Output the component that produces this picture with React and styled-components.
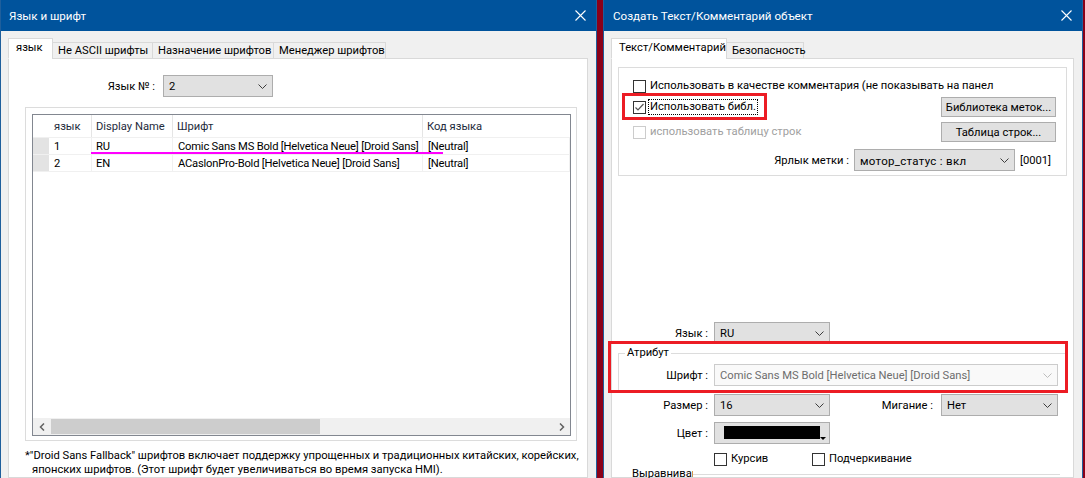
import React from 'react';
import styled, { createGlobalStyle } from 'styled-components';

const GlobalStyle = createGlobalStyle`
  html, body {
    margin: 0;
    padding: 0;
    overflow: hidden;
  }
  body {
    font-family: Roboto, "Liberation Sans", Arial, sans-serif;
    font-size: 11.2px;
    color: #000;
  }
`;

const Desk = styled.div`
  display: flex;
  gap: 6px;
  width: 1085px;
  height: 478px;
  background: #8a0019;
  overflow: hidden;
`;

const Window = styled.div`
  box-sizing: border-box;
  flex: none;
  width: ${p => p.$w}px;
  height: 100%;
  display: flex;
  flex-direction: column;
  background: #f0f0f0;
  border-left: 1px solid #1f5f9c;
  border-right: 1px solid #1f5f9c;
`;

const TitleBar = styled.div`
  flex: none;
  height: 31px;
  display: flex;
  align-items: center;
  justify-content: space-between;
  padding: 0 10px 0 ${p => p.$pad}px;
  background: #00539c;
  color: #fff;
  font-size: 11.6px;
`;

const Body = styled.div`
  flex: 1;
  display: flex;
  flex-direction: column;
  padding: 7px 8px 0 7px;
  min-height: 0;
`;

const TabStrip = styled.div`
  display: flex;
  align-items: flex-end;
  height: 21px;
  margin-bottom: -1px;
  position: relative;
  z-index: 1;
`;

const Tab = styled.div`
  box-sizing: border-box;
  width: ${p => p.$w}px;
  height: ${p => (p.$active ? 21 : 17)}px;
  padding: 0 0 ${p => (p.$active ? 2 : 0)}px ${p => (p.$active ? 7 : 5)}px;
  display: flex;
  align-items: center;
  background: ${p => (p.$active ? '#fff' : '#f0f0f0')};
  border: 1px solid #d9d9d9;
  border-bottom: ${p => (p.$active ? '1px solid #fff' : '1px solid #d9d9d9')};
  margin-left: ${p => (p.$first ? 0 : -1)}px;
  white-space: nowrap;
`;

const TabPanel = styled.div`
  flex: 1;
  display: flex;
  flex-direction: column;
  background: #fff;
  border: 1px solid #d9d9d9;
  min-height: 0;
`;

/* ---------- controls ---------- */

const Select = styled.div`
  box-sizing: border-box;
  flex: none;
  width: ${p => p.$w}px;
  height: 22px;
  display: flex;
  align-items: center;
  justify-content: space-between;
  padding: 1px 5px 0 5px;
  background: ${p => (p.$disabled ? '#f9f9f9' : '#e1e1e1')};
  border: 1px solid ${p => (p.$disabled ? '#cccccc' : '#adadad')};
  color: ${p => (p.$disabled ? '#6d6d6d' : '#000')};
  font-size: ${p => (p.$wide ? '11.5px' : 'inherit')};
  letter-spacing: ${p => (p.$wide ? '0.3px' : 'normal')};
  white-space: nowrap;
`;

const Chevron = ({ color = '#3c3c3c' }) => (
  <svg width="9" height="5" viewBox="0 0 9 5">
    <polyline points="0.5,0.5 4.5,4.5 8.5,0.5" fill="none" stroke={color} strokeWidth="1" />
  </svg>
);

const Combo = ({ w, value, disabled, wide }) => (
  <Select $w={w} $disabled={disabled} $wide={wide}>
    <span>{value}</span>
    <Chevron color={disabled ? '#bdbdbd' : '#3c3c3c'} />
  </Select>
);

const Button = styled.div`
  box-sizing: border-box;
  width: 115px;
  height: 20px;
  display: flex;
  align-items: center;
  justify-content: center;
  background: #e1e1e1;
  border: 1px solid #adadad;
`;

const Box = styled.span`
  box-sizing: border-box;
  flex: none;
  width: 13px;
  height: 13px;
  display: inline-flex;
  align-items: center;
  justify-content: center;
  background: #fff;
  border: 1px solid ${p => (p.$disabled ? '#cccccc' : '#333333')};
`;

const CheckLabel = styled.label`
  position: relative;
  display: inline-flex;
  align-items: center;
  gap: 2px;
  color: ${p => (p.$disabled ? '#a0a0a0' : '#000')};
  white-space: nowrap;
`;

const FocusText = styled.span`
  padding: 0 1px;
  line-height: 14px;
  border: 1px dotted ${p => (p.$focus ? '#000' : 'transparent')};
`;

const Highlight = styled.div`
  position: absolute;
  box-sizing: border-box;
  border: 3px solid #ec1c24;
  pointer-events: none;
`;

const Checkbox = ({ children, checked, disabled, focus }) => (
  <CheckLabel $disabled={disabled}>
    <Box $disabled={disabled}>
      {checked && (
        <svg width="11" height="11" viewBox="0 0 11 11">
          <polyline points="1.5,5.5 4,8 9.5,2" fill="none" stroke="#555" strokeWidth="1.2" />
        </svg>
      )}
    </Box>
    <FocusText $focus={focus}>{children}</FocusText>
  </CheckLabel>
);

const CloseIcon = () => (
  <svg width="11" height="11" viewBox="0 0 11 11">
    <path d="M0.5 0.5 L10.5 10.5 M10.5 0.5 L0.5 10.5" stroke="#fff" strokeWidth="1.1" />
  </svg>
);

/* ---------- left window ---------- */

const LangRow = styled.div`
  display: grid;
  grid-template-columns: 146px 110px;
  column-gap: 8px;
  align-items: center;
  margin: 16px 0 0 0;
  text-align: right;
`;

const TableGroup = styled.div`
  box-sizing: border-box;
  height: 338px;
  margin: 10px 10px 0 16px;
  padding: 6px 5px 4px 6px;
  border: 1px solid #dcdcdc;
`;

const ListView = styled.div`
  box-sizing: border-box;
  height: 100%;
  display: flex;
  flex-direction: column;
  border: 1px solid #828790;
`;

const cols = '17px 42px 81px 250px 1fr';

const HeaderRow = styled.div`
  display: grid;
  grid-template-columns: ${cols};
  height: 22px;
  border-bottom: 1px solid #f0f0f0;
  color: #1e2b3c;
`;

const HeadCell = styled.div`
  display: flex;
  align-items: center;
  padding-left: 4px;
  border-right: 1px solid ${p => (p.$divider ? '#e5e5e5' : 'transparent')};
`;

const DataRow = styled.div`
  position: relative;
  display: grid;
  grid-template-columns: ${cols};
  height: 16px;
  border-bottom: 1px solid #f0f0f0;
`;

const Cell = styled.div`
  display: flex;
  align-items: center;
  padding-left: ${p => (p.$pad ? p.$pad : 4)}px;
  background: ${p => (p.$gutter ? '#e3e3e3' : '#fff')};
  border-right: 1px solid ${p => (p.$gutter ? '#fff' : '#f0f0f0')};
  letter-spacing: -0.2px;
  white-space: nowrap;
  overflow: hidden;
`;

const Marker = styled.div`
  position: absolute;
  left: 58px;
  top: 14px;
  width: 352px;
  height: 2px;
  background: #ff00ff;
`;

const ListFill = styled.div`
  flex: 1;
`;

const HScroll = styled.div`
  flex: none;
  height: 17px;
  display: flex;
  align-items: center;
  background: #f0f0f0;
`;

const ScrollArrow = styled.div`
  width: 17px;
  height: 17px;
  display: flex;
  align-items: center;
  justify-content: center;
`;

const Thumb = styled.div`
  height: 15px;
  width: 269px;
  margin-left: 1px;
  background: #cdcdcd;
`;

const Note = styled.div`
  margin-top: ${p => p.$top}px;
  padding-left: ${p => p.$indent}px;
  line-height: 14px;
  white-space: nowrap;
`;

const Arrow = ({ dir }) => (
  <svg width="6" height="8" viewBox="0 0 6 8">
    <polyline
      points={dir === 'left' ? '5,0.5 1.5,4 5,7.5' : '1,0.5 4.5,4 1,7.5'}
      fill="none"
      stroke="#606060"
      strokeWidth="1.5"
    />
  </svg>
);

const rows = [
  { n: '1', name: 'RU', font: 'Comic Sans MS Bold [Helvetica Neue] [Droid Sans]', code: '[Neutral]', mark: true },
  { n: '2', name: 'EN', font: 'ACaslonPro-Bold [Helvetica Neue] [Droid Sans]', code: '[Neutral]' },
];

const LanguageWindow = () => (
  <Window $w={597}>
    <TitleBar $pad={8}>
      <span>Язык и шрифт</span>
      <CloseIcon />
    </TitleBar>
    <Body>
      <TabStrip>
        <Tab $active $first $w={45}>язык</Tab>
        <Tab $w={101}>Не ASCII шрифты</Tab>
        <Tab $w={122}>Назначение шрифтов</Tab>
        <Tab $w={113}>Менеджер шрифтов</Tab>
      </TabStrip>
      <TabPanel>
        <LangRow>
          <span>Язык № :</span>
          <Combo w={110} value="2" />
        </LangRow>
        <TableGroup>
          <ListView>
            <HeaderRow>
              <HeadCell />
              <HeadCell $divider>язык</HeadCell>
              <HeadCell $divider>Display Name</HeadCell>
              <HeadCell $divider>Шрифт</HeadCell>
              <HeadCell>Код языка</HeadCell>
            </HeaderRow>
            {rows.map(r => (
              <DataRow key={r.n}>
                <Cell $gutter />
                <Cell>{r.n}</Cell>
                <Cell>{r.name}</Cell>
                <Cell $pad={5}>{r.font}</Cell>
                <Cell $pad={5}>{r.code}</Cell>
                {r.mark && <Marker />}
              </DataRow>
            ))}
            <ListFill />
            <HScroll>
              <ScrollArrow><Arrow dir="left" /></ScrollArrow>
              <Thumb />
              <ListFill />
              <ScrollArrow><Arrow dir="right" /></ScrollArrow>
            </HScroll>
          </ListView>
        </TableGroup>
        <Note $top={8} $indent={16}>
          *"Droid Sans Fallback" шрифтов включает поддержку упрощенных и традиционных китайских, корейских,
        </Note>
        <Note $top={0} $indent={23}>
          японских шрифтов. (Этот шрифт будет увеличиваться во время запуска HMI).
        </Note>
      </TabPanel>
    </Body>
  </Window>
);

/* ---------- right window ---------- */

const GroupBox = styled.div`
  margin: 8px 6px 0 6px;
  padding: 8px 10px 4px 14px;
  border: 1px solid #dcdcdc;
  display: flex;
  flex-direction: column;
`;

const OptionRow = styled.div`
  display: flex;
  align-items: center;
  justify-content: ${p => (p.$end ? 'flex-end' : 'space-between')};
  height: ${p => p.$h || 20}px;
  margin-top: ${p => p.$top || 0}px;
  gap: 5px;
`;

const CodeText = styled.span`
  width: 36px;
`;

const FormRow = styled.div`
  display: grid;
  grid-template-columns: ${p => p.$cols};
  column-gap: 6px;
  align-items: center;
  margin-top: ${p => p.$top || 0}px;
  margin-right: ${p => p.$right || 0}px;
`;

const FormLabel = styled.span`
  text-align: right;
  padding-right: ${p => p.$pad || 0}px;
  white-space: nowrap;
`;

const AttrWrap = styled.div`
  position: relative;
  margin-top: 2px;
`;

const Fieldset = styled.fieldset`
  margin: 0 7px 0 6px;
  padding: 4px 0 6px 0;
  border: 1px solid #dcdcdc;
  border-bottom: none;
  min-width: 0;
`;

const Legend = styled.legend`
  margin-left: 6px;
  padding: 0 2px;
  line-height: 14px;
  font-size: inherit;
`;

const ColorPicker = styled.div`
  position: relative;
  box-sizing: border-box;
  width: 116px;
  height: 22px;
  padding: 3px 9px 4px 9px;
  background: #e1e1e1;
  border: 1px solid #adadad;
`;

const Swatch = styled.div`
  height: 100%;
  background: #000;
`;

const DropMark = styled.div`
  position: absolute;
  right: 3px;
  bottom: 3px;
  width: 0;
  height: 0;
  border-left: 3px solid transparent;
  border-right: 3px solid transparent;
  border-top: 3px solid #000;
`;

const StyleChecks = styled.div`
  display: grid;
  grid-template-columns: 98px auto;
  height: 14px;
  align-items: center;
`;

const AlignGroup = styled.div`
  display: flex;
  align-items: center;
  margin: 2px 13px 0 20px;
  height: 14px;
`;

const AlignLegend = styled.span`
  width: 61px;
  overflow: hidden;
  white-space: nowrap;
  line-height: 14px;
`;

const AlignLine = styled.div`
  flex: 1;
  border-top: 1px solid #dcdcdc;
`;

const TextObjectWindow = () => (
  <Window $w={480}>
    <TitleBar $pad={9}>
      <span>Создать Текст/Комментарий объект</span>
      <CloseIcon />
    </TitleBar>
    <Body>
      <TabStrip>
        <Tab $active $first $w={116}>Текст/Комментарий</Tab>
        <Tab $w={78}>Безопасность</Tab>
      </TabStrip>
      <TabPanel>
        <GroupBox>
          <OptionRow>
            <Checkbox>Использовать в качестве комментария (не показывать на панел</Checkbox>
          </OptionRow>
          <OptionRow $top={1}>
            <CheckLabel as="div">
              <Checkbox checked focus>Использовать библ.</Checkbox>
              <Highlight style={{ left: -11, top: -6, width: 145, height: 27 }} />
            </CheckLabel>
            <Button>Библиотека меток...</Button>
          </OptionRow>
          <OptionRow $top={5}>
            <Checkbox disabled>использовать таблицу строк</Checkbox>
            <Button>Таблица строк...</Button>
          </OptionRow>
          <OptionRow $top={7} $h={22} $end>
            <span>Ярлык метки :</span>
            <Combo w={161} value="мотор_статус : вкл" wide />
            <CodeText>[0001]</CodeText>
          </OptionRow>
        </GroupBox>

        <FormRow $cols="96px auto" $top={146}>
          <FormLabel>Язык :</FormLabel>
          <Combo w={116} value="RU" />
        </FormRow>

        <AttrWrap>
          <Fieldset>
            <Legend>Атрибут</Legend>
            <FormRow $cols="89px auto">
              <FormLabel>Шрифт :</FormLabel>
              <Combo w={344} value="Comic Sans MS Bold [Helvetica Neue] [Droid Sans]" disabled />
            </FormRow>
          </Fieldset>
          <Highlight style={{ left: -4, right: 5, top: -5, bottom: -1 }} />
        </AttrWrap>

        <FormRow $cols="96px 116px 1fr 117px" $top={2} $right={15}>
          <FormLabel>Размер :</FormLabel>
          <Combo w={116} value="16" />
          <FormLabel $pad={2}>Мигание :</FormLabel>
          <Combo w={117} value="Нет" />
        </FormRow>

        <FormRow $cols="96px auto" $top={6}>
          <FormLabel>Цвет :</FormLabel>
          <ColorPicker>
            <Swatch />
            <DropMark />
          </ColorPicker>
        </FormRow>

        <FormRow $cols="96px auto" $top={7}>
          <span />
          <StyleChecks>
            <Checkbox>Курсив</Checkbox>
            <Checkbox>Подчеркивание</Checkbox>
          </StyleChecks>
        </FormRow>

        <AlignGroup>
          <AlignLegend>Выравнивание</AlignLegend>
          <AlignLine />
        </AlignGroup>
      </TabPanel>
    </Body>
  </Window>
);

export default function App() {
  return (
    <>
      <GlobalStyle />
      <Desk>
        <LanguageWindow />
        <TextObjectWindow />
      </Desk>
    </>
  );
}
